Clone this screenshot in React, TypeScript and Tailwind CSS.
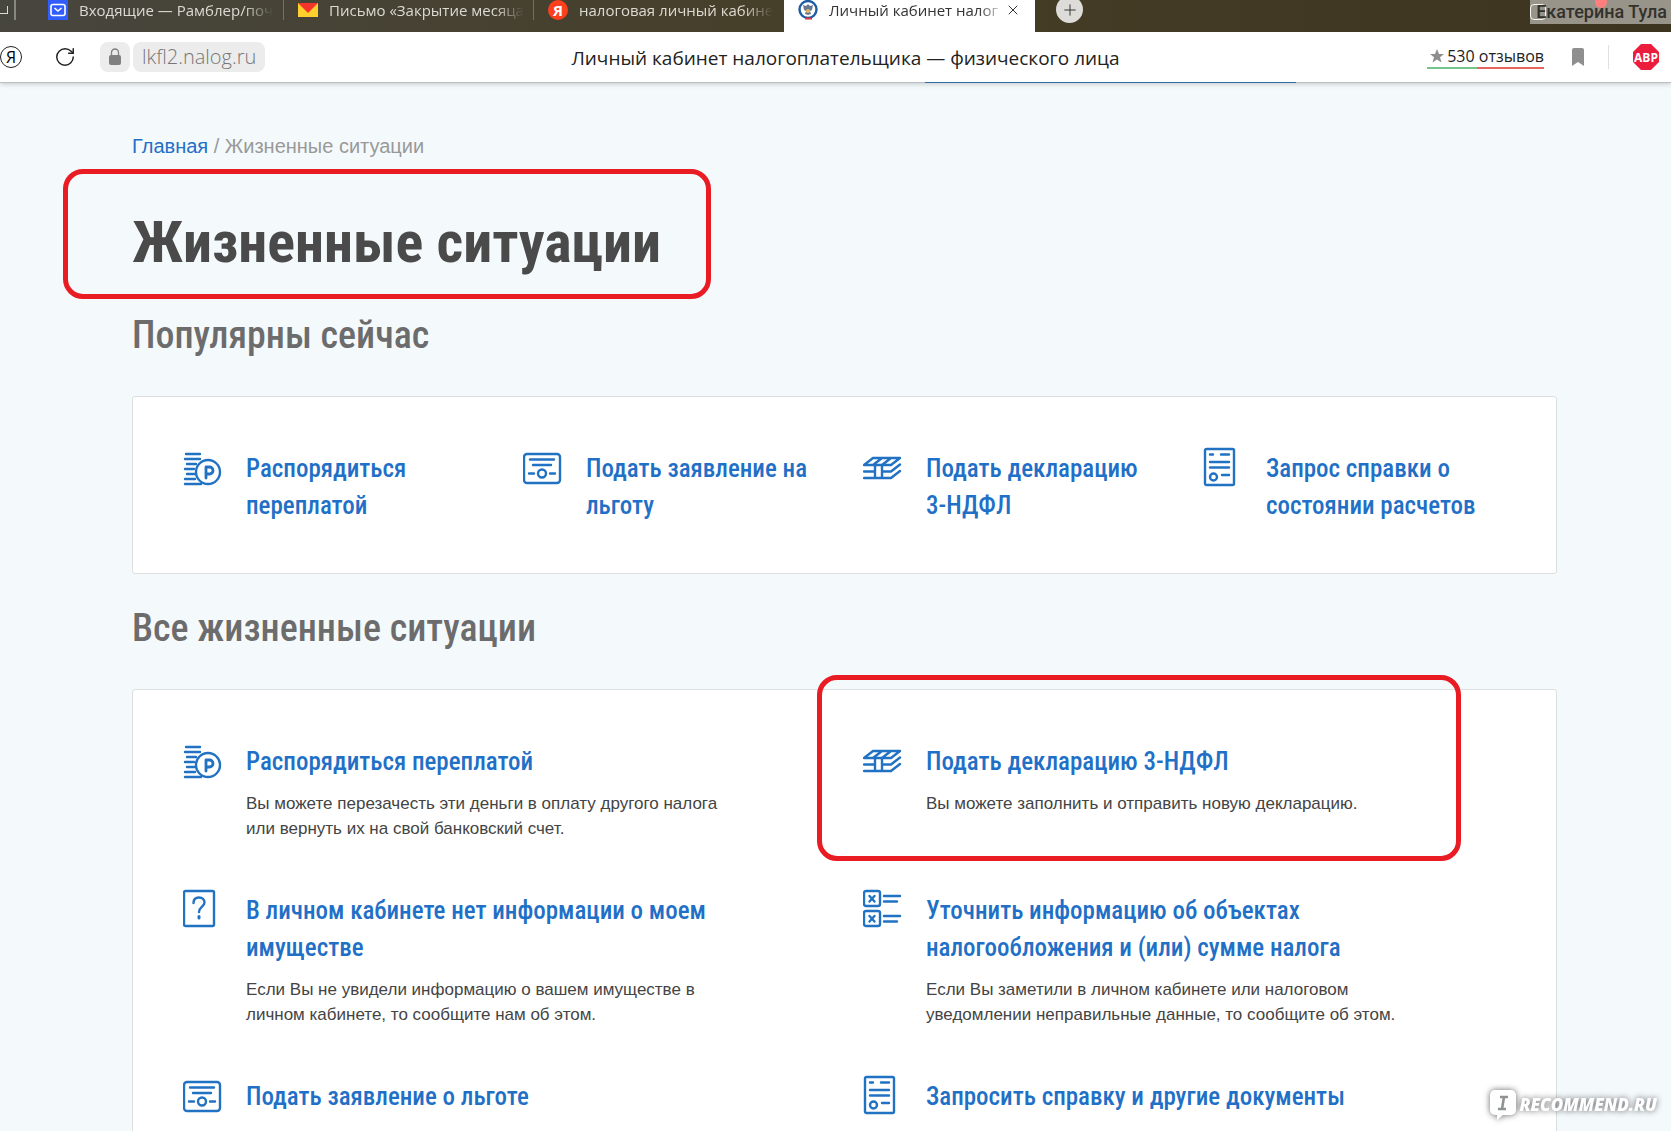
import React from "react";
import { Plus, RotateCw, X } from "lucide-react";

type IconName = "coins" | "certificate" | "layers" | "document" | "question" | "checklist";

interface Situation {
  icon: IconName;
  title: string;
  text?: string;
  marked?: boolean;
}

const popular: Situation[] = [
  { icon: "coins", title: "Распорядиться переплатой" },
  { icon: "certificate", title: "Подать заявление на льготу" },
  { icon: "layers", title: "Подать декларацию 3-НДФЛ" },
  { icon: "document", title: "Запрос справки о состоянии расчетов" },
];

const situations: Situation[] = [
  { icon: "coins", title: "Распорядиться переплатой", text: "Вы можете перезачесть эти деньги в оплату другого налога или вернуть их на свой банковский счет." },
  { icon: "layers", title: "Подать декларацию 3-НДФЛ", text: "Вы можете заполнить и отправить новую декларацию.", marked: true },
  { icon: "question", title: "В личном кабинете нет информации о моем имуществе", text: "Если Вы не увидели информацию о вашем имуществе в личном кабинете, то сообщите нам об этом." },
  { icon: "checklist", title: "Уточнить информацию об объектах налогообложения и (или) сумме налога", text: "Если Вы заметили в личном кабинете или налоговом уведомлении неправильные данные, то сообщите об этом." },
  { icon: "certificate", title: "Подать заявление о льготе" },
  { icon: "document", title: "Запросить справку и другие документы" },
];

const shapes: Record<IconName, React.ReactNode> = {
  coins: (
    <>
      <path d="M3 7h14M2 12h15M4 17h9M2 22h9M4 27h8M2 32h10M2 37h16" />
      <circle cx="25" cy="25" r="12" />
      <path d="M23 31V20h3.500a3 3 0 0 1 0 7H23" strokeWidth="2.800" />
    </>
  ),
  certificate: (
    <>
      <rect x="1" y="7" width="36" height="29" rx="3" />
      <path d="M7 12.500h24M10 18h18M6 26.500h5M27 26.500h5" />
      <circle cx="19" cy="26.500" r="4" />
    </>
  ),
  layers: (
    <>
      <path d="M1 18L10 11H37L28 18ZM10 18L19 11M19 18L28 11" />
      <path d="M1 24.500h11M19 24.500h9l9-7M1 31h27l9-7M12 18v13M19 18v13" />
    </>
  ),
  document: (
    <>
      <rect x="2" y="2" width="29" height="36" rx="1.500" />
      <path d="M7 7.500h3M18 7.500h8M7 15h19M7 20.500h19M19 28h7" />
      <circle cx="10.500" cy="30" r="3.500" />
    </>
  ),
  question: (
    <>
      <rect x="1" y="2" width="30" height="35" rx="1.500" />
      <path d="M10.500 14c0-3.500 2.200-5.500 5.500-5.500s5.500 2 5.500 5c0 4-5.500 4.500-5.500 9.500" />
      <path d="M16 27.500v1.500" strokeWidth="3" />
    </>
  ),
  checklist: (
    <>
      <rect x="1" y="2" width="16" height="15" rx="2" />
      <rect x="1" y="22" width="16" height="15" rx="2" />
      <path d="M6.500 7l5 5.500M11.500 7l-5 5.500M6.500 27l5 5.500M11.500 27l-5 5.500M21 7h16M21 12.500h13M21 27h16M21 32.500h13" />
    </>
  ),
};

function SituationIcon({ name }: { name: IconName }) {
  return (
    <svg viewBox="0 0 40 40" className="size-10 shrink-0" fill="none" stroke="#2272c3" strokeWidth="2.400" strokeLinecap="round" strokeLinejoin="round" aria-hidden="true">
      {shapes[name]}
    </svg>
  );
}

function SituationItem({ item }: { item: Situation }) {
  return (
    <li className="relative flex gap-[23px] pr-12">
      {item.marked && <div className="pointer-events-none absolute -top-[65px] -left-[46px] h-[186px] w-[644px] rounded-[20px] border-5 border-[#e91c24]" />}
      <SituationIcon name={item.icon} />
      <div className="max-w-[500px] pt-[3px]">
        <a href="#" className="block font-['Roboto_Condensed',sans-serif] text-[25px] leading-[37px] font-medium text-[#1f70c6]">
          {item.title}
        </a>
        {item.text && <p className="mt-[11px] text-[17px] leading-[25px] text-[#444]">{item.text}</p>}
      </div>
    </li>
  );
}

function Tab({ icon, title }: { icon: React.ReactNode; title: string }) {
  return (
    <a href="#" className="flex h-5 w-[250px] items-center gap-[11px] border-r border-white/25 pr-[10px] pl-[14px]">
      {icon}
      <span className="mask-r-from-85% whitespace-nowrap">{title}</span>
    </a>
  );
}

function Browser() {
  return (
    <header className="relative z-10 shrink-0 font-['Open_Sans',sans-serif] shadow-[0_1px_5px_rgba(0,0,0,0.2)]">
      <nav className="flex h-8 items-start bg-linear-to-r from-[#47463e] via-[#463e27] to-[#3c341f] text-[15px] leading-5 text-[#dcdad2]">
        <div className="flex h-5 w-4 items-center border-r-2 border-white/35">
          <span className="size-2 border-r border-b border-white/80" />
        </div>
        <div className="w-[18px]" />
        <Tab
          title="Входящие — Рамблер/поч"
          icon={
            <svg viewBox="0 0 20 20" className="size-5 shrink-0">
              <rect width="20" height="20" fill="#315efb" />
              <rect x="3" y="4.500" width="14" height="11" rx="2" fill="none" stroke="#fff" strokeWidth="1.600" />
              <path d="M6.500 8l3.500 3 3.500-3" fill="none" stroke="#fff" strokeWidth="1.600" />
            </svg>
          }
        />
        <Tab
          title="Письмо «Закрытие месяца"
          icon={
            <svg viewBox="0 0 20 20" className="size-5 shrink-0">
              <path d="M0 3h20v14H0z" fill="#ffcf2e" />
              <path d="M0 3h20L10 13z" fill="#f5352b" />
            </svg>
          }
        />
        <a href="#" className="flex h-5 w-[250px] items-center gap-[11px] pr-[10px] pl-[14px]">
          <span className="flex size-5 shrink-0 items-center justify-center rounded-full bg-[#fc3f1d] font-bold text-white">Я</span>
          <span className="mask-r-from-85% whitespace-nowrap">налоговая личный кабине</span>
        </a>
        <div className="flex h-8 w-[251px] items-start bg-white pl-[14px] text-[#333]">
          <svg viewBox="0 0 20 20" className="size-5 shrink-0">
            <circle cx="10" cy="9.500" r="8.500" fill="#fff" stroke="#1d5ba5" strokeWidth="2.400" />
            <path d="M5 5l3 1 2-2 2 2 3-1-1 5-2 1 1 3-3 1-3-1 1-3-2-1z" fill="#69788f" />
            <circle cx="10" cy="11" r="2" fill="#e0b96a" />
            <path d="M7 18.500h7" stroke="#d9333f" strokeWidth="2" />
          </svg>
          <a href="#" className="ml-[11px] w-[176px] mask-r-from-85% whitespace-nowrap">Личный кабинет налог</a>
          <button type="button" aria-label="Закрыть вкладку" className="flex h-5 items-center">
            <X className="size-4" strokeWidth={1.5} />
          </button>
        </div>
        <button type="button" aria-label="Новая вкладка" className="-mt-1 ml-[21px] flex size-[27px] items-center justify-center rounded-full bg-[#dddcd8] text-[#333]">
          <Plus className="size-[18px]" strokeWidth={1.3} />
        </button>
        <div className="relative ml-auto flex h-6 items-center bg-[#99948a] pr-1 pl-[6px] font-['Roboto',sans-serif] text-lg font-medium text-[#33312c]">
          <span className="absolute top-1 left-0 size-4 rounded-sm border border-white/90" />
          <span className="absolute -top-1 left-[65px] size-3 rounded-full bg-[#ff7f7f]" />
          <span className="relative">Екатерина Тула</span>
        </div>
      </nav>

      <div className="relative flex h-[51px] items-center border-b border-[#b9bfc2] bg-white">
        <button type="button" aria-label="Яндекс" className="flex size-[22px] items-center justify-center rounded-full border border-[#222] text-base leading-none text-black">Я</button>
        <button type="button" aria-label="Обновить" className="ml-8">
          <RotateCw className="size-[22px] text-[#222]" strokeWidth={1.6} />
        </button>
        <span className="ml-6 flex h-[30px] w-[30px] items-center justify-center rounded-lg bg-[#ececec]">
          <svg viewBox="0 0 14 18" className="h-[18px] w-[14px]">
            <rect x="1" y="7" width="12" height="10" rx="2" fill="#808080" />
            <path d="M3.500 8V4.500a3.500 3.500 0 0 1 7 0V8" fill="none" stroke="#808080" strokeWidth="1.300" />
          </svg>
        </span>
        <a href="#" className="ml-[3px] flex h-[30px] items-center rounded-lg bg-[#ececec] px-[9px] text-xl font-light text-[#777]">lkfl2.nalog.ru</a>
        <h2 className="pointer-events-none absolute inset-x-0 pt-[2px] pl-5 text-center text-[19px] text-[#222]">Личный кабинет налогоплательщика — физического лица</h2>
        <div className="ml-auto flex items-center pr-3">
          <a href="#" className="flex flex-col text-base leading-[22px] text-[#222]">
            <span className="flex items-center gap-[2px]">
              <svg viewBox="0 0 16 16" className="ml-[2px] size-4" fill="#8e8e8e">
                <path d="M8 1l2 5h5l-4 3.300 1.500 5.200L8 11.400l-4.500 3.100L5 9.300 1 6h5z" />
              </svg>
              530 отзывов
            </span>
            <span className="flex h-[2px]">
              <span className="w-[43%] bg-[#74c48c]" />
              <span className="flex-1 bg-[#e8675f]" />
            </span>
          </a>
          <button type="button" aria-label="В закладки" className="ml-7">
            <svg viewBox="0 0 12 18" className="h-[18px] w-3" fill="#8f8f8f">
              <path d="M2 0h8a2 2 0 0 1 2 2v16l-6-4-6 4V2a2 2 0 0 1 2-2z" />
            </svg>
          </button>
          <span className="mr-6 ml-6 h-6 w-px bg-[#e0e0e0]" />
          <svg viewBox="0 0 26 26" className="size-[26px]">
            <path d="M8 0h10l8 8v10l-8 8H8l-8-8V8z" fill="#ec1c3c" />
            <text x="13" y="17.500" textAnchor="middle" fontSize="12" fontWeight="700" fill="#fff">ABP</text>
          </svg>
        </div>
        <span className="absolute -bottom-px left-[925px] h-px w-[371px] bg-[#2f6da8]" />
      </div>
    </header>
  );
}

export default function App() {
  return (
    <div className="flex h-screen flex-col overflow-hidden bg-[#f4f9fc] font-['Liberation_Sans',sans-serif]">
      <Browser />
      <main className="min-h-0 flex-1 overflow-hidden pt-[49px] pr-[114px] pl-[132px]">
        <nav className="text-xl leading-7 text-[#999]">
          <a href="#" className="text-[#1f70c6]">Главная</a> / Жизненные ситуации
        </nav>

        <div className="relative mt-[43px]">
          <div className="pointer-events-none absolute -top-[34px] -left-[69px] h-[130px] w-[648px] rounded-[20px] border-5 border-[#e91c24]" />
          <h1 className="font-['Roboto_Condensed',sans-serif] text-[58px] leading-[78px] font-bold text-[#4a4a4a]">Жизненные ситуации</h1>
        </div>

        <h2 className="mt-[30px] font-['Roboto_Condensed',sans-serif] text-[38px] leading-[48px] font-medium text-[#6c6c6c]">Популярны сейчас</h2>
        <ul className="mt-[37px] grid grid-cols-4 rounded-[3px] border border-[#dcdfe0] bg-white pt-[50px] pr-[13px] pb-[49px] pl-[50px]">
          {popular.map((item) => (
            <SituationItem key={item.title} item={item} />
          ))}
        </ul>

        <h2 className="mt-[30px] font-['Roboto_Condensed',sans-serif] text-[38px] leading-[48px] font-medium text-[#6c6c6c]">Все жизненные ситуации</h2>
        <ul className="mt-[37px] grid grid-cols-2 gap-y-12 rounded-[3px] border border-[#dcdfe0] bg-white pt-[50px] pr-[13px] pb-24 pl-[50px]">
          {situations.map((item) => (
            <SituationItem key={item.title} item={item} />
          ))}
        </ul>
      </main>

      <div className="fixed right-[14px] bottom-[11px] z-20 flex items-center gap-[3px] drop-shadow-[0_0_3px_rgba(0,0,0,0.6)]">
        <svg viewBox="0 0 26 30" className="h-[30px] w-[26px]">
          <path d="M5 0h16a5 5 0 0 1 5 5v15a5 5 0 0 1-5 5h-8l-6 5v-5H5a5 5 0 0 1-5-5V5a5 5 0 0 1 5-5z" fill="#fff" />
          <path d="M10 7h8M8 19h8M14 7l-2 12" stroke="#8f9294" strokeWidth="2.600" />
        </svg>
        <span className="font-['Open_Sans',sans-serif] text-[17px] leading-6 font-extrabold text-white italic">RECOMMEND.RU</span>
      </div>
    </div>
  );
}
